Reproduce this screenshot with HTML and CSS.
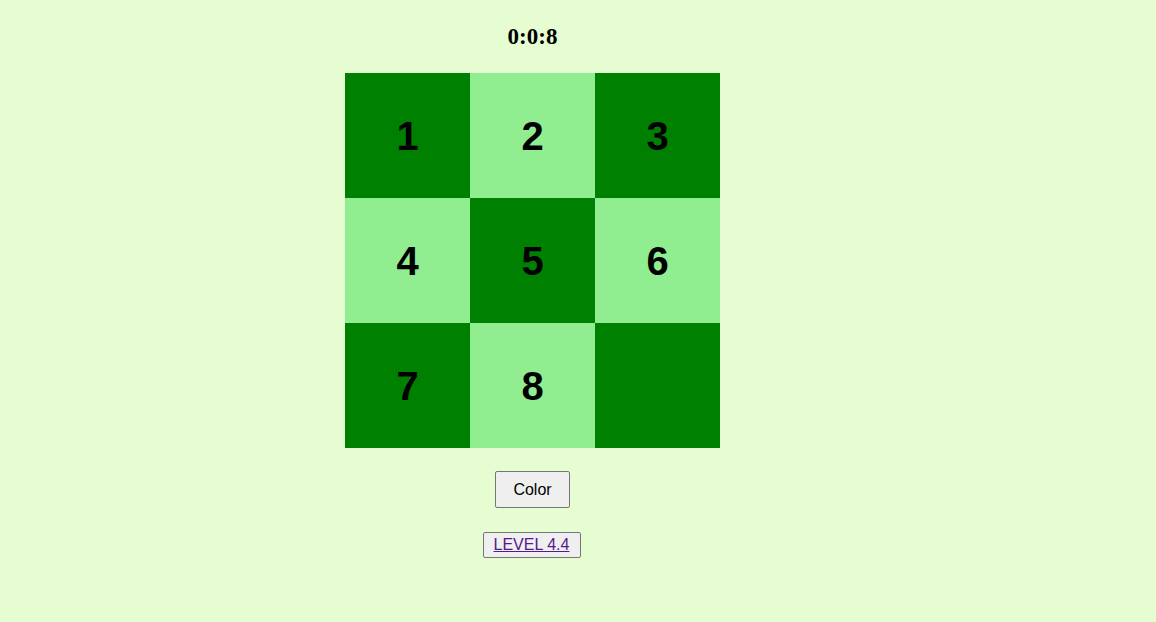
FILE: index.html
```html
<!DOCTYPE html>
<html>
<head>
<meta charset="utf-8">
<link rel="stylesheet" href="styles.css">
</head>
<body>
<div class="app">
  <h2 class="timer">0:0:8</h2>
  <div class="board">
    <div class="cell dark">1</div>
    <div class="cell light">2</div>
    <div class="cell dark">3</div>
    <div class="cell light">4</div>
    <div class="cell dark">5</div>
    <div class="cell light">6</div>
    <div class="cell dark">7</div>
    <div class="cell light">8</div>
    <div class="cell dark"></div>
  </div>
  <button class="color-btn">Color</button>
  <a class="level" href="#">LEVEL 4.4</a>
</div>
</body>
</html>
```
FILE: styles.css
```css
html, body {
  margin: 0;
  padding: 0;
  background: #e6fdd2;
}
body {
  padding: 8px;
}
.app {
  width: 375px;
  margin-left: 337px;
  display: flex;
  flex-direction: column;
  align-items: center;
}
.timer {
  font-family: "Liberation Serif", serif;
  font-weight: bold;
  font-size: 23px;
  margin: 15px 0 23px;
  line-height: 27px;
}
.board {
  display: grid;
  grid-template-columns: repeat(3, 125px);
  grid-template-rows: repeat(3, 125px);
}
.cell {
  display: flex;
  align-items: center;
  justify-content: center;
  padding-top: 1px;
  font-family: "Liberation Sans", Arial, sans-serif;
  font-weight: bold;
  font-size: 40px;
  color: #000;
}
.dark { background: #008000; }
.light { background: #90ee90; }
.color-btn {
  margin-top: 23px;
  width: 75px;
  height: 37px;
  font-family: "Liberation Sans", Arial, sans-serif;
  font-size: 16px;
  background: #efefef;
  border: 1px solid #767676;
  border-radius: 2px;
  color: #000;
  padding: 0;
}
.level {
  margin-top: 24px;
  margin-right: 2px;
  display: inline-block;
  width: 96px;
  height: 24px;
  line-height: 24px;
  text-align: center;
  font-family: "Liberation Sans", Arial, sans-serif;
  font-size: 16px;
  color: #551a8b;
  background: #efefef;
  border: 1px solid #767676;
  border-radius: 2px;
  text-decoration: underline;
}
```
